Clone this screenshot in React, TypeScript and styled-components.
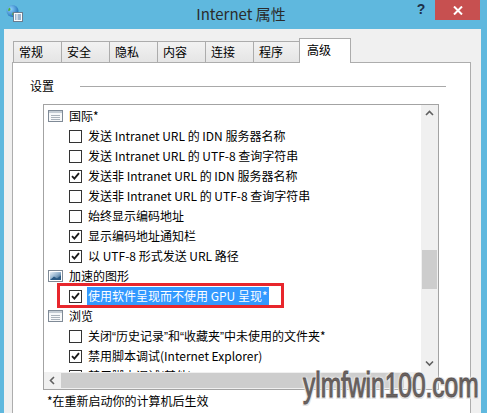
import React from 'react';
import styled, { createGlobalStyle } from 'styled-components';

const Global = createGlobalStyle`
  html, body { margin: 0; padding: 0; }
  body {
    width: 487px;
    height: 413px;
    overflow: hidden;
    font-family: "Noto Sans CJK SC", "Microsoft YaHei", sans-serif;
  }
`;

const Window = styled.div`
  position: relative;
  width: 487px;
  height: 413px;
  background: #5fb8de;
  display: flex;
  flex-direction: column;
  overflow: hidden;
`;

const TitleBar = styled.div`
  height: 29px;
  flex: none;
  display: grid;
  grid-template-columns: 1fr auto 1fr;
  align-items: start;
`;

const AppIcon = styled.svg`
  margin: 4px 0 0 5px;
  display: block;
`;

const Title = styled.div`
  font-family: "Noto Sans CJK SC", sans-serif;
  font-size: 15px;
  line-height: 28px;
  color: #2b2b2b;
  margin-right: 5px;
`;

const Controls = styled.div`
  justify-self: end;
  display: flex;
  align-items: flex-start;
  margin-right: 7px;
`;

const HelpButton = styled.div`
  width: 28px;
  height: 20px;
  font: bold 14px "Liberation Sans", sans-serif;
  line-height: 19px;
  text-align: center;
  color: #1d3048;
`;

const CloseButton = styled.div`
  width: 45px;
  height: 20px;
  background: #c75050;
  display: flex;
  align-items: center;
  justify-content: center;
`;

const Client = styled.div`
  flex: 1;
  min-height: 0;
  margin: 0 6px 0 4px;
  background: #f0f0f0;
  display: flex;
  flex-direction: column;
  padding-top: 9px;
`;

const TabStrip = styled.div`
  height: 24px;
  flex: none;
  display: flex;
  align-items: flex-end;
  margin-left: 9px;
  font-size: 12px;
`;

const Tab = styled.div<{ $active?: boolean }>`
  box-sizing: border-box;
  position: relative;
  border: 1px solid #acacac;
  border-bottom: none;
  color: #000;
  white-space: nowrap;
  ${(p) =>
    p.$active
      ? `
    width: 52px;
    height: 25px;
    margin-left: -2px;
    margin-bottom: -1px;
    padding-left: 7px;
    line-height: 22px;
    background: #fff;
    z-index: 1;
  `
      : `
    width: 49px;
    height: 21px;
    margin-right: -1px;
    padding-left: 5px;
    line-height: 19px;
    background: linear-gradient(#f2f2f2, #e5e5e5);
  `}
`;

const Panel = styled.div`
  flex: 1;
  min-height: 0;
  margin: 0 10px 0 8px;
  background: #fff;
  border: 1px solid #adadad;
  border-bottom: none;
  display: flex;
  flex-direction: column;
  font-size: 12px;
  color: #000;
`;

const SectionHeader = styled.div`
  margin-top: 15px;
  height: 16px;
  padding-left: 17px;
  display: flex;
  align-items: center;
  line-height: 16px;
`;

const Rule = styled.div`
  flex: 1;
  height: 1px;
  background: #a9a9a9;
  margin: 0 24px 0 26px;
`;

const ListBox = styled.div`
  box-sizing: border-box;
  margin: 10px 0 0 30px;
  width: 396px;
  height: 286px;
  flex: none;
  border: 1px solid #a3a3a3;
  display: grid;
  grid-template-columns: 1fr 17px;
  grid-template-rows: 1fr 17px;
`;

const Viewport = styled.div`
  overflow: hidden;
  padding-top: 1px;
  min-height: 0;
`;

const Row = styled.div<{ $group?: boolean }>`
  position: relative;
  height: 20px;
  display: flex;
  align-items: center;
  gap: 6px;
  padding-left: ${(p) => (p.$group ? 4 : 25)}px;
  white-space: nowrap;
`;

const Label = styled.span<{ $selected?: boolean }>`
  display: inline-block;
  line-height: 18px;
  ${(p) =>
    p.$selected
      ? `background: #3399ff; color: #fff; padding: 0 1px; margin-left: -1px;`
      : ``}
`;

const Quote = styled.span`
  font-family: "Liberation Sans", Arial, sans-serif;
`;

const Box = styled.span`
  box-sizing: border-box;
  width: 13px;
  height: 13px;
  flex: none;
  border: 1px solid #333;
  background: #fff;
  display: flex;
  align-items: center;
  justify-content: center;
`;

const Annotation = styled.div`
  position: absolute;
  left: 13px;
  top: -3px;
  width: 227px;
  height: 25px;
  box-sizing: border-box;
  border: 3px solid #e8262c;
  pointer-events: none;
`;

const VScroll = styled.div`
  background: #f0f0f0;
  display: flex;
  flex-direction: column;
  min-height: 0;
`;

const HScroll = styled.div`
  background: #f0f0f0;
  display: flex;
  align-items: stretch;
`;

const ArrowButton = styled.div`
  width: 17px;
  height: 17px;
  flex: none;
  display: flex;
  align-items: center;
  justify-content: center;
`;

const VTrack = styled.div`
  flex: 1;
  min-height: 0;
`;

const VThumb = styled.div<{ $offset: number; $size: number }>`
  margin: ${(p) => p.$offset}px 1px 0 1px;
  height: ${(p) => p.$size}px;
  background: #cdcdcd;
`;

const HThumb = styled.div`
  flex: 1;
  margin: 1px 0;
  background: #cdcdcd;
`;

const Corner = styled.div`
  background: #f0f0f0;
`;

const Footer = styled.div`
  margin: 3px 0 0 34px;
  line-height: 16px;
`;

const Watermark = styled.div`
  position: absolute;
  left: 303px;
  top: 367px;
  font-family: "Liberation Sans", Arial, sans-serif;
  font-size: 35px;
  line-height: 35px;
  color: #6a6361;
  -webkit-text-stroke: 0.9px #5b5452;
  transform: scaleX(0.7);
  transform-origin: left top;
  white-space: nowrap;
  text-shadow: 1.5px 1.5px 0 #e3e3e3, -1.5px -1.5px 0 #e3e3e3, 1.5px -1.5px 0 #e3e3e3,
    -1.5px 1.5px 0 #e3e3e3, 0 0 5px #ffffff;
  pointer-events: none;
`;

const Check = () => (
  <svg width="9" height="8" viewBox="0 0 9 8">
    <path d="M1 4.2 L3.4 6.6 L8 1.2" fill="none" stroke="#1a1a1a" strokeWidth="1.9" />
  </svg>
);

const ListIcon = () => (
  <svg width="15" height="12" viewBox="0 0 15 12" style={{ flex: 'none' }}>
    <rect x="0.5" y="0.5" width="14" height="11" fill="#f7f8f9" stroke="#7f8a96" />
    <rect x="1" y="1" width="13" height="2" fill="#c3cbd3" />
    <path d="M3 5.5h9M3 7.5h9M3 9.5h9" stroke="#aab2bb" />
  </svg>
);

const PictureIcon = () => (
  <svg width="15" height="12" viewBox="0 0 15 12" style={{ flex: 'none' }}>
    <defs>
      <linearGradient id="picg" x1="0" y1="0" x2="1" y2="1">
        <stop offset="0" stopColor="#e9f0f6" />
        <stop offset="0.5" stopColor="#8fb0cc" />
        <stop offset="1" stopColor="#1f4b74" />
      </linearGradient>
    </defs>
    <rect x="0.5" y="0.5" width="14" height="11" fill="#fff" stroke="#7f8a96" />
    <rect x="2" y="2" width="11" height="8" fill="url(#picg)" />
    <path d="M2 10 L6 6.5 L9 8.5 L13 5.5 L13 10 Z" fill="#2a5a84" />
  </svg>
);

type Item =
  | { kind: 'group'; text: string; icon: 'list' | 'picture' }
  | { kind: 'item'; text: string; checked: boolean; selected?: boolean };

const items: Item[] = [
  { kind: 'group', text: '国际*', icon: 'list' },
  { kind: 'item', text: '发送 Intranet URL 的 IDN 服务器名称', checked: false },
  { kind: 'item', text: '发送 Intranet URL 的 UTF-8 查询字符串', checked: false },
  { kind: 'item', text: '发送非 Intranet URL 的 IDN 服务器名称', checked: true },
  { kind: 'item', text: '发送非 Intranet URL 的 UTF-8 查询字符串', checked: false },
  { kind: 'item', text: '始终显示编码地址', checked: false },
  { kind: 'item', text: '显示编码地址通知栏', checked: true },
  { kind: 'item', text: '以 UTF-8 形式发送 URL 路径', checked: true },
  { kind: 'group', text: '加速的图形', icon: 'picture' },
  { kind: 'item', text: '使用软件呈现而不使用 GPU 呈现*', checked: true, selected: true },
  { kind: 'group', text: '浏览', icon: 'list' },
  { kind: 'item', text: '关闭“历史记录”和“收藏夹”中未使用的文件夹*', checked: false },
  { kind: 'item', text: '禁用脚本调试(Internet Explorer)', checked: true },
  { kind: 'item', text: '禁用脚本调试(其他)', checked: true },
];

const tabs = ['常规', '安全', '隐私', '内容', '连接', '程序', '高级'];

const renderText = (text: string) =>
  text.split(/([“”])/).map((part, i) =>
    part === '“' || part === '”' ? <Quote key={i}>{part}</Quote> : <React.Fragment key={i}>{part}</React.Fragment>
  );

const Chevron = ({ dir }: { dir: 'up' | 'down' | 'left' | 'right' }) => {
  const paths: Record<string, string> = {
    up: 'M1 5 L4.5 1.5 L8 5',
    down: 'M1 1.5 L4.5 5 L8 1.5',
    left: 'M5 1 L1.5 4.5 L5 8',
    right: 'M1.5 1 L5 4.5 L1.5 8',
  };
  const horiz = dir === 'left' || dir === 'right';
  return (
    <svg width={horiz ? 7 : 9} height={horiz ? 9 : 7} viewBox={horiz ? '0 0 7 9' : '0 0 9 7'}>
      <path d={paths[dir]} fill="none" stroke="#606060" strokeWidth="1.6" />
    </svg>
  );
};

export default function App() {
  return (
    <>
      <Global />
      <Window>
        <TitleBar>
          <AppIcon width="18" height="18" viewBox="0 0 18 18">
            <defs>
              <radialGradient id="globe" cx="0.35" cy="0.35" r="0.7">
                <stop offset="0" stopColor="#8fd3ff" />
                <stop offset="1" stopColor="#1f6fb8" />
              </radialGradient>
            </defs>
            <circle cx="7.5" cy="7" r="6" fill="url(#globe)" />
            <path d="M4 3.5 Q6 4 5.5 6 Q4 7.5 3 6.5 Z M8 8 Q10 8 9.5 10.5 Q8 12 7 10.5 Z" fill="#4cae3c" />
            <rect x="8.5" y="8.5" width="9" height="9" fill="#fdfdfd" stroke="#6b7d90" />
            <path d="M10 11h1.5M12.5 11h3.5M10 13h1.5M12.5 13h3.5M10 15h1.5M12.5 15h3.5" stroke="#3c6fa3" />
          </AppIcon>
          <Title>Internet 属性</Title>
          <Controls>
            <HelpButton>?</HelpButton>
            <CloseButton>
              <svg width="10" height="9" viewBox="0 0 10 9">
                <path d="M1 0.5 L9 8.5 M9 0.5 L1 8.5" stroke="#fff" strokeWidth="2" />
              </svg>
            </CloseButton>
          </Controls>
        </TitleBar>
        <Client>
          <TabStrip>
            {tabs.map((t, i) => (
              <Tab key={t} $active={i === tabs.length - 1}>
                {t}
              </Tab>
            ))}
          </TabStrip>
          <Panel>
            <SectionHeader>
              <span>设置</span>
              <Rule />
            </SectionHeader>
            <ListBox>
              <Viewport>
                {items.map((it, i) =>
                  it.kind === 'group' ? (
                    <Row key={i} $group>
                      {it.icon === 'list' ? <ListIcon /> : <PictureIcon />}
                      <Label>{it.text}</Label>
                    </Row>
                  ) : (
                    <Row key={i}>
                      <Box>{it.checked && <Check />}</Box>
                      <Label $selected={it.selected}>{renderText(it.text)}</Label>
                      {it.selected && <Annotation />}
                    </Row>
                  )
                )}
              </Viewport>
              <VScroll>
                <ArrowButton>
                  <Chevron dir="up" />
                </ArrowButton>
                <VTrack>
                  <VThumb $offset={128} $size={39} />
                </VTrack>
                <ArrowButton>
                  <Chevron dir="down" />
                </ArrowButton>
              </VScroll>
              <HScroll>
                <ArrowButton>
                  <Chevron dir="left" />
                </ArrowButton>
                <HThumb />
                <ArrowButton>
                  <Chevron dir="right" />
                </ArrowButton>
              </HScroll>
              <Corner />
            </ListBox>
            <Footer>*在重新启动你的计算机后生效</Footer>
          </Panel>
        </Client>
        <Watermark>ylmfwin100.com</Watermark>
      </Window>
    </>
  );
}
